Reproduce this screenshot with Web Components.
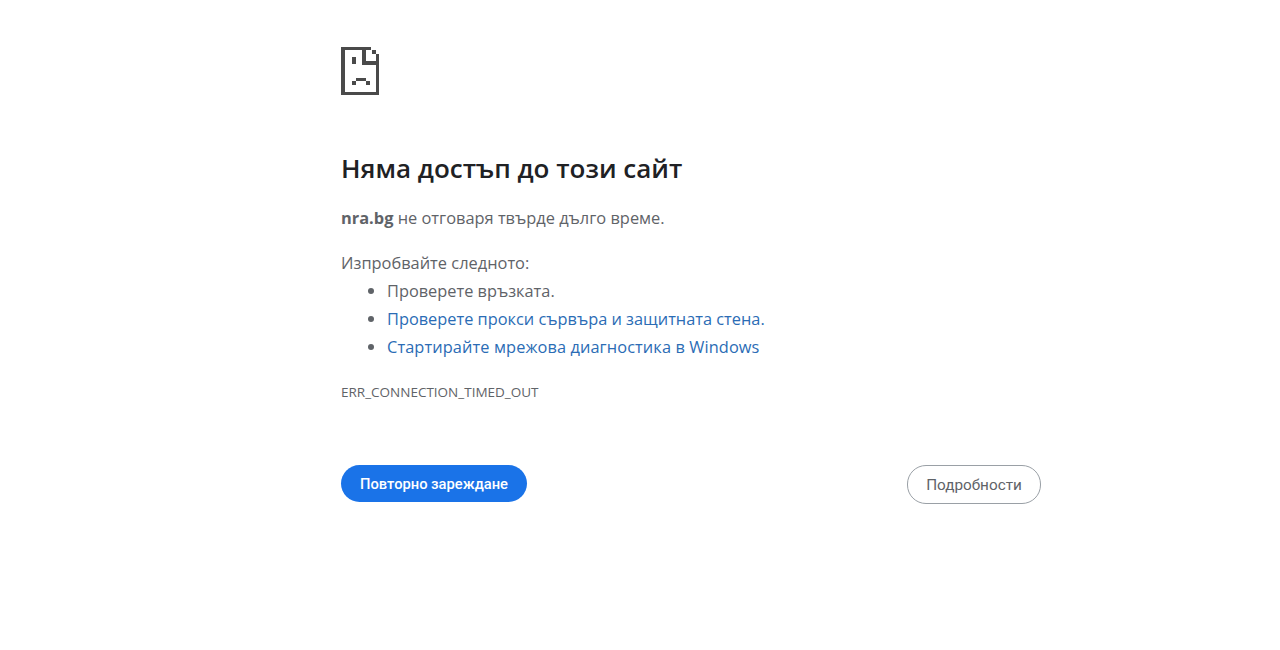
<!DOCTYPE html>
<html lang="bg"><head><meta charset="utf-8"><title>nra.bg</title>
<style>html,body{margin:0;background:#fff;height:100%;overflow:hidden}body{font-family:"Open Sans","Noto Sans",sans-serif}</style></head>
<body><error-page></error-page>
<script>
function def(name, html){customElements.define(name, class extends HTMLElement{constructor(){super();this.attachShadow({mode:'open'}).innerHTML=html;}});}
def('sad-icon',`<style>:host{display:block;width:39px;height:49px}svg{display:block}</style>
<svg width="39" height="49" viewBox="0 0 39 49" shape-rendering="crispEdges" fill="#4a4a4a">
<path d="M0 0H30V3H4V45H35V7H38V48H0Z"/>
<path d="M21 3H25V14H38V18H21Z"/>
<rect x="31" y="3" width="4" height="4"/>
<rect x="11" y="10" width="4" height="7"/>
<rect x="15" y="31" width="10" height="3"/><rect x="11" y="34" width="4" height="4"/><rect x="25" y="34" width="4" height="4"/>
</svg>`);
def('error-heading',`<style>:host{display:block;font:600 26px/32px "Open Sans","Noto Sans",sans-serif;color:#202124}</style><slot></slot>`);
def('error-text',`<style>:host{display:block;font:16.4px/28px "Open Sans","Noto Sans",sans-serif;color:#5f6368}</style><slot></slot>`);
def('hint-list',`<style>:host{display:block;margin:0;padding-left:46px;font:16.35px/28px "Open Sans","Noto Sans",sans-serif;color:#5f6368}</style><slot></slot>`);
def('hint-item',`<style>:host{display:block;position:relative}:host::before{content:"";position:absolute;left:-19px;top:11px;width:6px;height:6px;border-radius:50%;background:#5f6368}:host([link]){color:#2b6cb5}:host([wide]){letter-spacing:.1px}</style><slot></slot>`);
def('error-code',`<style>:host{display:block;font:13.5px/18px "Open Sans","Noto Sans",sans-serif;color:#5f6368}</style><slot></slot>`);
def('pill-button',`<style>:host{display:inline-flex;align-items:center;justify-content:center;box-sizing:border-box;border-radius:19px;font:500 14.7px/18px Roboto,sans-serif}
:host([primary]){background:#1a73e8;color:#fff;width:186px;height:37px}
:host([secondary]){background:#fff;color:#5f6368;border:1px solid #9aa0a6;width:134px;height:39px;font-weight:400;font-size:15.3px}</style><slot></slot>`);
def('error-page',`<style>:host{display:block;box-sizing:border-box;width:700px;margin-left:341px;padding-top:47px}
.h{margin-top:56px}.a{margin-top:20px}.b{margin-top:17px}.c{margin-top:22px}
.row{display:flex;justify-content:space-between;align-items:flex-start;margin-top:64px}
b{font-weight:700}</style>
<sad-icon></sad-icon>
<error-heading class="h">Няма достъп до този сайт</error-heading>
<error-text class="a"><b>nra.bg</b> не отговаря твърде дълго време.</error-text>
<error-text class="b">Изпробвайте следното:</error-text>
<hint-list><hint-item>Проверете връзката.</hint-item><hint-item link>Проверете прокси сървъра и защитната стена.</hint-item><hint-item link wide>Стартирайте мрежова диагностика в Windows</hint-item></hint-list>
<error-code class="c">ERR_CONNECTION_TIMED_OUT</error-code>
<div class="row"><pill-button primary>Повторно зареждане</pill-button><pill-button secondary>Подробности</pill-button></div>`);
</script></body></html>
